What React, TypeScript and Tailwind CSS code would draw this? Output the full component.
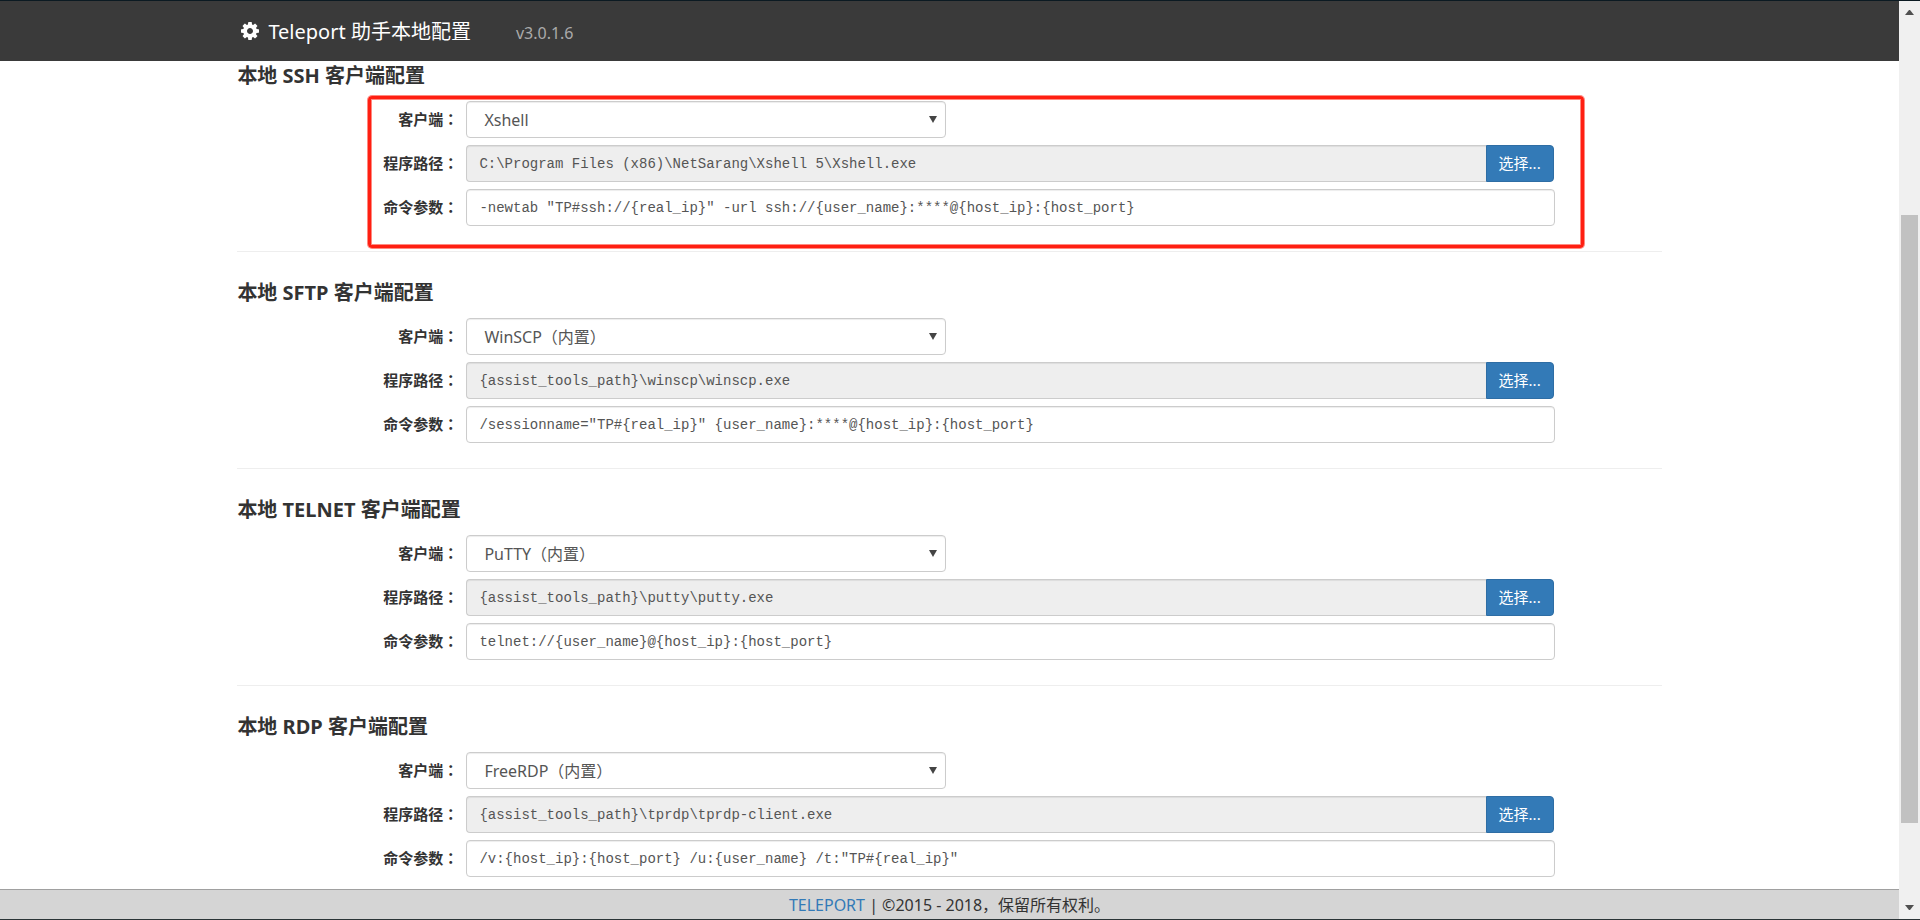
import { useState } from 'react';

interface ClientConfig {
  key: string;
  title: string;
  client: string;
  path: string;
  args: string;
  highlighted?: boolean;
}

const CLIENTS: ClientConfig[] = [
  {
    key: 'ssh',
    title: '本地 SSH 客户端配置',
    client: 'Xshell',
    path: 'C:\\Program Files (x86)\\NetSarang\\Xshell 5\\Xshell.exe',
    args: '-newtab "TP#ssh://{real_ip}" -url ssh://{user_name}:****@{host_ip}:{host_port}',
    highlighted: true,
  },
  {
    key: 'sftp',
    title: '本地 SFTP 客户端配置',
    client: 'WinSCP（内置）',
    path: '{assist_tools_path}\\winscp\\winscp.exe',
    args: '/sessionname="TP#{real_ip}" {user_name}:****@{host_ip}:{host_port}',
  },
  {
    key: 'telnet',
    title: '本地 TELNET 客户端配置',
    client: 'PuTTY（内置）',
    path: '{assist_tools_path}\\putty\\putty.exe',
    args: 'telnet://{user_name}@{host_ip}:{host_port}',
  },
  {
    key: 'rdp',
    title: '本地 RDP 客户端配置',
    client: 'FreeRDP（内置）',
    path: '{assist_tools_path}\\tprdp\\tprdp-client.exe',
    args: '/v:{host_ip}:{host_port} /u:{user_name} /t:"TP#{real_ip}"',
  },
];

const FIELD = 'h-[37px] border border-[#ccc] text-[#555] shadow-[inset_0_1px_1px_rgba(0,0,0,0.075)] outline-none';
const MONO = "font-['Liberation_Mono','Noto_Sans_CJK_SC',monospace] text-[14px] leading-6";

function CogIcon() {
  return (
    <svg viewBox="128 128 1536 1536" className="size-[18px] fill-current" aria-hidden="true">
      <path d="M1152 896q0-106-75-181t-181-75-181 75-75 181 75 181 181 75 181-75 75-181zm512-109v222q0 12-8 23t-20 13l-185 28q-19 54-39 91 35 50 107 138 10 12 10 25t-9 23q-27 37-99 108t-94 71q-12 0-26-9l-138-108q-44 23-91 38-16 136-29 186-7 28-36 28h-222q-14 0-24.500-8.500t-11.500-21.500l-28-184q-49-16-90-37l-141 107q-10 9-25 9-14 0-25-11-126-114-165-168-7-10-7-23 0-12 8-23 15-21 51-66.500t54-70.500q-27-50-41-99l-183-27q-13-2-21-12.500t-8-23.500v-222q0-12 8-23t19-13l186-28q14-46 39-92-40-57-107-138-10-12-10-24 0-10 9-23 26-36 98.500-107.500t94.500-71.500q13 0 26 10l138 107q44-23 91-38 16-136 29-186 7-28 36-28h222q14 0 24.500 8.500t11.500 21.500l28 184q49 16 90 37l142-107q9-9 24-9 13 0 25 10 129 119 165 170 7 8 7 22 0 12-8 23-15 21-51 66.500t-54 70.500q26 50 41 98l183 28q13 2 21 12.500t8 23.500z" />
    </svg>
  );
}

function FieldLabel({ htmlFor, text }: { htmlFor: string; text: string }) {
  return (
    <label htmlFor={htmlFor} className="w-[221px] shrink-0 pb-0.5 text-right text-[15px] leading-5 font-bold text-[#333]">
      {text}
      <span className="font-['Noto_Sans_CJK_TC',sans-serif]">：</span>
    </label>
  );
}

function ClientSection({ config }: { config: ClientConfig }) {
  const [args, setArgs] = useState(config.args);
  const id = config.key;

  return (
    <section>
      <h2 className="mb-[13px] text-[20px] leading-6 font-bold text-[#333]">{config.title}</h2>
      <div className="relative flex flex-col gap-[7px]">
        <div className="flex items-center gap-2">
          <FieldLabel htmlFor={`${id}-client`} text="客户端" />
          <div className="relative w-[480px]">
            <select id={`${id}-client`} className={`${FIELD} w-full appearance-none rounded bg-white pl-[17px] text-[16px]`}>
              <option>{config.client}</option>
            </select>
            <svg viewBox="0 0 8 7" className="pointer-events-none absolute top-[15px] right-[9px] h-[7px] w-2 fill-[#444]" aria-hidden="true">
              <path d="M0 0h8L4 7z" />
            </svg>
          </div>
        </div>

        <div className="flex items-center gap-2">
          <FieldLabel htmlFor={`${id}-path`} text="程序路径" />
          <div className="mr-[108px] flex flex-1">
            <input id={`${id}-path`} readOnly value={config.path} className={`${FIELD} ${MONO} min-w-0 flex-1 rounded-l border-r-0 bg-[#eee] px-3`} />
            <button type="button" className="h-[37px] w-[68px] rounded-r border border-[#2e6da4] bg-[#337ab7] text-[15px] text-white">
              选择...
            </button>
          </div>
        </div>

        <div className="flex items-center gap-2">
          <FieldLabel htmlFor={`${id}-args`} text="命令参数" />
          <input
            id={`${id}-args`}
            value={args}
            onChange={e => setArgs(e.target.value)}
            className={`${FIELD} ${MONO} mr-[107px] min-w-0 flex-1 rounded bg-white px-3`}
          />
        </div>

        {/* Red marker around the fields */}
        {config.highlighted && (
          <div className="pointer-events-none absolute -top-[5px] right-[78px] -bottom-[22px] left-[131px] rounded border-[3px] border-[#ff1f12] shadow-[0_0_0_1px_#ff8a80,inset_0_0_0_1px_#ff8a80]" />
        )}
      </div>
    </section>
  );
}

function ScrollBar() {
  return (
    <div className="flex w-[21px] shrink-0 flex-col items-center bg-[#f0f0f0] py-[9px]" aria-hidden="true">
      <svg viewBox="0 0 9 5" className="h-[5px] w-[9px] fill-[#505050]">
        <path d="M0 5h9L5 0H4z" />
      </svg>
      <div className="flex w-[17px] flex-1 flex-col">
        <div className="grow-200" />
        <div className="grow-608 bg-[#c1c1c1]" />
        <div className="grow-82" />
      </div>
      <svg viewBox="0 0 9 5" className="h-[5px] w-[9px] fill-[#505050]">
        <path d="M0 0h9L5 5H4z" />
      </svg>
    </div>
  );
}

export default function App() {
  return (
    <div className="flex h-screen flex-col border-t border-b border-t-[#0b1a22] border-b-[#2b3437] bg-white font-['Noto_Sans','Noto_Sans_CJK_SC',sans-serif]">
      <div className="flex min-h-0 flex-1">
        <div className="flex min-w-0 flex-1 flex-col">
          <header className="h-[60px] shrink-0 bg-[#3a3a3a]">
            <div className="mx-auto flex h-full w-3/4 items-center pl-1 text-white">
              <CogIcon />
              <h1 className="ml-[9px] pt-0.5 text-[20px] leading-6">Teleport 助手本地配置</h1>
              <span className="ml-[45px] pt-1 text-[16px] leading-5 text-[#aaa]">v3.0.1.6</span>
            </div>
          </header>

          <main className="min-h-0 flex-1 overflow-hidden">
            <div className="mx-auto w-3/4 pt-[3px]">
              {CLIENTS.map((config, i) => (
                <div key={config.key}>
                  {i > 0 && <hr className="mt-[25px] mb-[29px] border-[#eee]" />}
                  <ClientSection config={config} />
                </div>
              ))}
            </div>
          </main>

          <footer className="flex h-[30px] shrink-0 items-center justify-center border-t border-[#a0a0a0] bg-[#d5d5d5] text-[16px] leading-6 text-[#333]">
            <p>
              <a href="#" className="text-[#337ab7]">TELEPORT</a> | ©2015 - 2018，保留所有权利。
            </p>
          </footer>
        </div>
        <ScrollBar />
      </div>
    </div>
  );
}
